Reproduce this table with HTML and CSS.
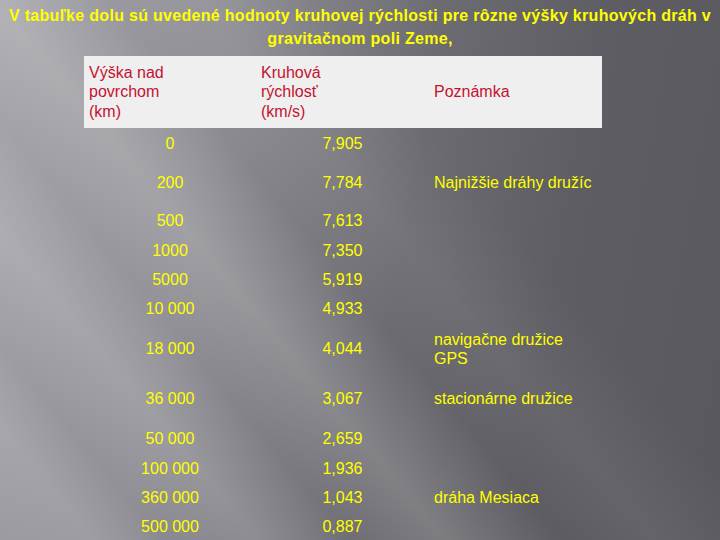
FILE: index.html
```html
<!DOCTYPE html>
<html lang="sk">
<head>
<meta charset="utf-8">
<title>Kruhová rýchlosť</title>
<link rel="stylesheet" href="styles.css">
</head>
<body>
<div class="slide">
  <h1 class="title">V tabuľke dolu sú uvedené hodnoty kruhovej rýchlosti pre rôzne výšky kruhových dráh v gravitačnom poli Zeme,</h1>
  <table class="data">
    <colgroup><col class="c1"><col class="c2"><col class="c3"></colgroup>
    <thead>
      <tr class="head">
        <th>Výška nad<br>povrchom<br>(km)</th>
        <th>Kruhová<br>rýchlosť<br>(km/s)</th>
        <th>Poznámka</th>
      </tr>
    </thead>
    <tbody>
      <tr class="r32"><td>0</td><td>7,905</td><td></td></tr>
      <tr class="r46"><td>200</td><td>7,784</td><td>Najnižšie dráhy družíc</td></tr>
      <tr class="r30"><td>500</td><td>7,613</td><td></td></tr>
      <tr class="r29"><td>1000</td><td>7,350</td><td></td></tr>
      <tr class="r29"><td>5000</td><td>5,919</td><td></td></tr>
      <tr class="r30"><td>10 000</td><td>4,933</td><td></td></tr>
      <tr class="r50"><td>18 000</td><td>4,044</td><td>navigačne družice<br>GPS</td></tr>
      <tr class="r50"><td>36 000</td><td>3,067</td><td>stacionárne družice</td></tr>
      <tr class="r30"><td>50 000</td><td>2,659</td><td></td></tr>
      <tr class="r29"><td>100 000</td><td>1,936</td><td></td></tr>
      <tr class="r29"><td>360 000</td><td>1,043</td><td>dráha Mesiaca</td></tr>
      <tr class="r29"><td>500 000</td><td>0,887</td><td></td></tr>
    </tbody>
  </table>
</div>
</body>
</html>
```
FILE: styles.css
```css
html, body {
  margin: 0;
  padding: 0;
}
body {
  width: 720px;
  height: 540px;
  overflow: hidden;
  font-family: "Liberation Sans", Arial, sans-serif;
  background-color: #6a696f;
  background-image:
    linear-gradient(50deg,
      rgba(255,255,255,0) 0%,
      rgba(255,255,255,0.10) 8%,
      rgba(255,255,255,0) 14%,
      rgba(255,255,255,0.14) 22%,
      rgba(255,255,255,0.02) 30%,
      rgba(255,255,255,0.16) 38%,
      rgba(255,255,255,0) 48%,
      rgba(255,255,255,0.06) 56%,
      rgba(255,255,255,0) 66%),
    linear-gradient(100deg, #a4a3a9 0%, #8f8e94 28%, #6c6b71 55%, #5e5d63 75%, #59585e 100%);
}
.slide {
  display: flex;
  flex-direction: column;
  align-items: flex-start;
}
.title {
  align-self: stretch;
  margin: 4px 0 6px;
  font-size: 16px;
  font-weight: bold;
  line-height: 23px;
  color: #ffff00;
  text-align: center;
  letter-spacing: 0.3px;
}
.data {
  margin-left: 84px;
  border-collapse: collapse;
  table-layout: fixed;
  width: 518px;
  font-size: 16px;
  color: #ffff00;
}
.c1 { width: 172px; }
.c2 { width: 173px; }
.c3 { width: 173px; }
.data th, .data td {
  padding: 0 5px;
  vertical-align: middle;
  line-height: 19.5px;
}
.head {
  height: 72px;
  background: #efefef;
}
.head th {
  font-weight: normal;
  text-align: left;
  color: #c41230;
}
.data td:nth-child(1),
.data td:nth-child(2) {
  text-align: center;
}
.data td:nth-child(3) {
  text-align: left;
}
.r29 { height: 29px; }
.r30 { height: 30px; }
.r32 { height: 32px; }
.r46 { height: 46px; }
.r50 { height: 50px; }
```
